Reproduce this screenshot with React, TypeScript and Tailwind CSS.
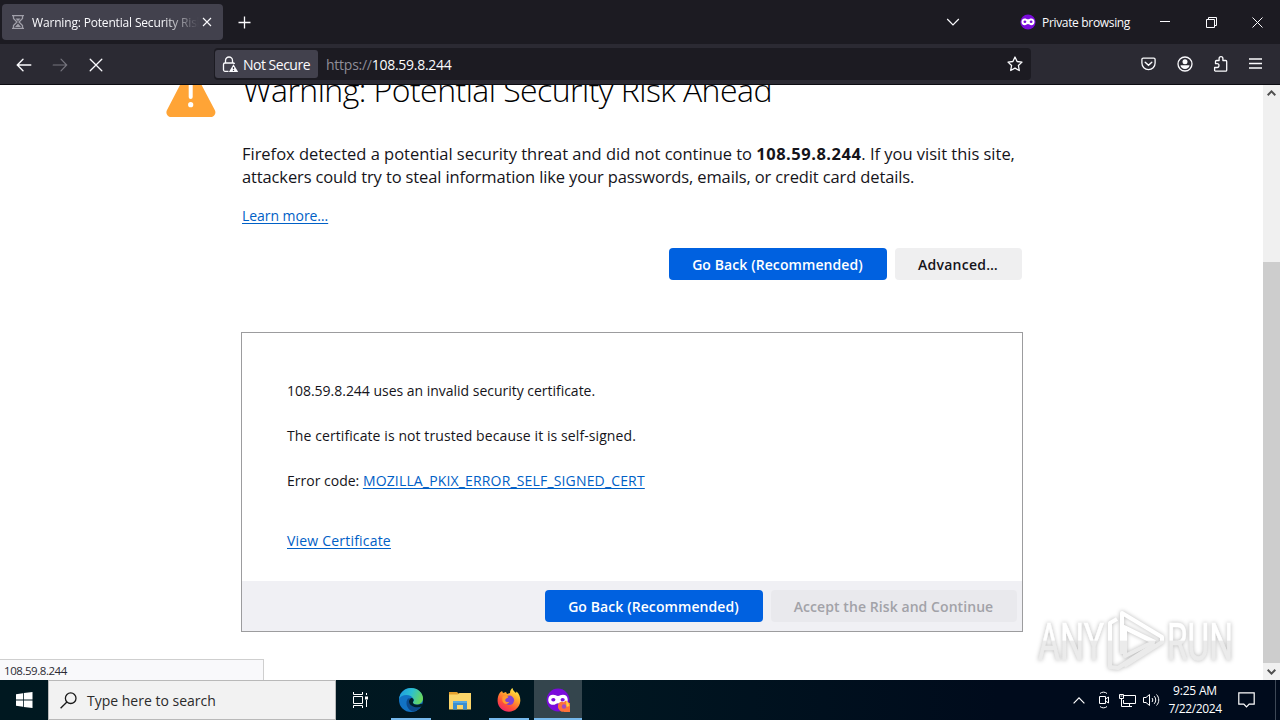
import React from "react";

const buttonBase = "flex h-8 shrink-0 items-center justify-center rounded text-[14px] font-semibold whitespace-nowrap";

function MaskIcon({ className }: { className?: string }) {
  return (
    <svg viewBox="0 0 16 16" className={className}>
      <circle cx="8" cy="8" r="7.6" fill="#7a0bdb" />
      <path
        d="M1.500 7.800c0-2 1.200-3.300 3.200-3.300 1.500 0 2.300.8 3.300.8s1.800-.8 3.300-.8c2 0 3.200 1.300 3.200 3.300s-1.200 3.400-3.200 3.400c-1.500 0-2.300-1.100-3.300-1.100s-1.800 1.100-3.300 1.100c-2 0-3.200-1.400-3.200-3.400z"
        fill="#fff"
      />
      <ellipse cx="4.900" cy="7.800" rx="1.400" ry="1.200" fill="#7a0bdb" />
      <ellipse cx="11.100" cy="7.800" rx="1.400" ry="1.200" fill="#7a0bdb" />
    </svg>
  );
}

function TabStrip() {
  return (
    <div className="flex h-11 shrink-0 items-center bg-[#1c1b22] text-[#fbfbfe]">
      <div className="ml-0.5 flex h-9 w-[221px] items-center rounded bg-[#42414d] pl-[9px]">
        <svg width="14" height="16" viewBox="0 0 14 16" fill="none" stroke="#a09fa9" strokeWidth="1.3">
          <path d="M1 1.700h12M1 14.300h12M2.500 2v2.500L6 8l-3.500 3.500V14M11.500 2v2.500L8 8l3.500 3.500V14" />
          <path d="M4.500 4.500h5L7 7.200zM4 13l3-3.500 3 3.500z" fill="#a09fa9" stroke="none" />
        </svg>
        <span className="ml-[7px] w-[167px] overflow-hidden pt-0.5 text-[12px] tracking-[-0.17px] whitespace-nowrap [mask-image:linear-gradient(to_right,#000_78%,transparent)]">
          Warning: Potential Security Risk Ahead
        </span>
        <svg width="10" height="10" viewBox="0 0 10 10" stroke="currentColor" strokeWidth="1.100" className="ml-[3px]">
          <path d="M1 1l8 8M9 1L1 9" />
        </svg>
      </div>
      <svg width="13" height="13" viewBox="0 0 13 13" stroke="currentColor" strokeWidth="1.300" className="ml-[15px]">
        <path d="M6.500.5v12M.5 6.500h12" />
      </svg>
      <svg width="14" height="8" viewBox="0 0 14 8" fill="none" stroke="currentColor" strokeWidth="1.200" className="ml-auto">
        <path d="M1.200 1L7 6.800 12.800 1" />
      </svg>
      <MaskIcon className="ml-[60px] size-4" />
      <span className="ml-[6px] w-[88px] pt-0.5 text-[12px] tracking-[-0.33px] whitespace-nowrap">Private browsing</span>
      <svg width="10" height="10" viewBox="0 0 10 10" stroke="currentColor" className="ml-[30px]">
        <path d="M0 4.500h10" />
      </svg>
      <svg width="11" height="11" viewBox="0 0 11 11" fill="none" stroke="currentColor" className="ml-[36px]">
        <path d="M.5 2.500h8v8h-8zM2.500 2.500v-2h8v8h-2" />
      </svg>
      <svg width="11" height="11" viewBox="0 0 11 11" stroke="currentColor" className="mr-[17px] ml-[35px]">
        <path d="M.5.5l10 10M10.500.5l-10 10" />
      </svg>
    </div>
  );
}

function Toolbar() {
  return (
    <div className="flex h-[41px] shrink-0 items-center border-b border-[#0c0c12] bg-[#2b2a33] text-[#fbfbfe]">
      <svg width="16" height="14" viewBox="0 0 16 14" fill="none" stroke="currentColor" strokeWidth="1.400" strokeLinecap="round" className="mt-px ml-4">
        <path d="M14.800 7H1.500M7 1.200L1.300 7 7 12.800" />
      </svg>
      <svg width="16" height="14" viewBox="0 0 16 14" fill="none" stroke="#76757e" strokeWidth="1.200" strokeLinecap="round" className="mt-px ml-5">
        <path d="M1.200 7h13.300M9 1.200L14.700 7 9 12.800" />
      </svg>
      <svg width="14" height="14" viewBox="0 0 14 14" stroke="currentColor" strokeWidth="1.300" strokeLinecap="round" className="mt-px ml-[21px]">
        <path d="M1.200 1.200l11.600 11.600M12.800 1.200L1.200 12.800" />
      </svg>
      <div className="ml-[111px] flex h-8 w-[817px] items-center rounded bg-[#1c1b22] pl-px text-[14px]">
        <div className="flex h-7 w-[103px] items-center rounded-[3px] bg-[#42414d] pl-[7px]">
          <svg width="17" height="17" viewBox="0 0 17 17" fill="none" stroke="currentColor" strokeWidth="1.300">
            <path d="M3.500 7V4.500a3.500 3.500 0 017 0V7" />
            <path d="M6.500 15.300H3a1.500 1.500 0 01-1.500-1.500V8.500A1.500 1.500 0 013 7h8a1.500 1.500 0 011.500 1" />
            <path d="M11.500 8.200L16.200 16H6.900z" fill="currentColor" stroke="none" />
            <path d="M11.500 11v2.200M11.500 14v1" stroke="#42414d" strokeWidth="1.200" />
          </svg>
          <span className="ml-[4px] pt-px tracking-[-0.5px] whitespace-nowrap">Not Secure</span>
        </div>
        <span className="ml-2 pt-px tracking-[-0.25px] text-[#8f8e98]">https://</span>
        <span className="pt-px tracking-[-0.28px]">108.59.8.244</span>
        <svg width="16" height="16" viewBox="0 0 16 16" fill="none" stroke="currentColor" strokeWidth="1.300" strokeLinejoin="round" className="mr-2 ml-auto">
          <path d="M8 1l2.100 4.500 4.900.6-3.600 3.400.9 5L8 12.100 3.700 14.500l.9-5L1 6.100l4.900-.6z" />
        </svg>
      </div>
      <svg width="15" height="14" viewBox="0 0 15 14" fill="none" stroke="currentColor" strokeWidth="1.300" className="mr-[21px] ml-auto">
        <path d="M2.200 1.200h10.600a1.300 1.300 0 011.300 1.300V6a6.600 6.600 0 01-13.200 0V2.500a1.300 1.300 0 011.300-1.300z" />
        <path d="M4.200 5.200l3.300 3.100 3.300-3.100" strokeLinecap="round" strokeWidth="1.400" />
      </svg>
      <svg width="16" height="16" viewBox="0 0 16 16" fill="none" stroke="currentColor" strokeWidth="1.300" className="mr-[20px]">
        <circle cx="8" cy="8" r="7" />
        <circle cx="8" cy="5.700" r="2.500" fill="currentColor" stroke="none" />
        <path d="M3.500 9.300h9c0 2-2 3.700-4.500 3.700s-4.500-1.700-4.500-3.700z" fill="currentColor" stroke="none" />
      </svg>
      <svg width="16" height="16" viewBox="0 0 16 16" fill="none" stroke="currentColor" strokeWidth="1.300" strokeLinejoin="round" className="mr-[20px]">
        <path d="M2.500 15.200h10.200a1 1 0 001-1V5.500a1 1 0 00-1-1H9.900V2.600a1.900 1.900 0 00-3.800 0v1.900H3.500a1 1 0 00-1 1v2.200h1.600a1.900 1.900 0 010 3.800H1.600v2.700a1 1 0 001 1z" />
      </svg>
      <svg width="13" height="11" viewBox="0 0 13 11" stroke="currentColor" strokeWidth="1.300" className="mr-[18px] -mt-px">
        <path d="M0 1h13M0 5.500h13M0 10h13" />
      </svg>
    </div>
  );
}

function ErrorPage() {
  return (
    <div className="min-w-0 flex-1 overflow-hidden text-[#15141a]">
      <div className="flex pl-[166px]">
        <svg width="50" height="48" viewBox="0 0 50 48" className="-mt-4 shrink-0">
          <path d="M20.500 3.500a4.800 4.800 0 018.500 0l19.900 37.700a4.700 4.700 0 01-4.200 6.800H5.100a4.700 4.700 0 01-4.200-6.800z" fill="#ffa436" />
          <path d="M24.700 10v18" stroke="#fff" strokeWidth="4" strokeLinecap="round" />
          <circle cx="24.700" cy="35.700" r="2.600" fill="#fff" />
        </svg>
        <div className="ml-[26px] w-[782px]">
          <h1 className="-mt-4 h-[42px] pl-px text-[32px] leading-[42px] font-light tracking-[-0.55px] whitespace-nowrap text-black">
            Warning: Potential Security Risk Ahead
          </h1>
          <p className="mt-[31px] text-[16.5px] leading-[23px] tracking-[-0.02px] whitespace-nowrap">
            Firefox detected a potential security threat and did not continue to{" "}
            <b className="tracking-[0.5px]">108.59.8.244</b>
            <span>. If you visit this site,</span>
            <br />
            <span className="tracking-[-0.13px]">
              attackers could try to steal information like your passwords, emails, or credit card details.
            </span>
          </p>
          <a className="mt-[18px] block h-5 text-[14px] leading-5 tracking-[-0.05px] text-[#0060c6] underline underline-offset-2">Learn more…</a>
          <div className="mt-[22px] flex justify-end gap-2 pr-0.5">
            <button className={buttonBase + " w-[218px] bg-[#0061e0] pr-px tracking-[0.09px] text-white"}>Go Back (Recommended)</button>
            <button className={buttonBase + " w-[127px] bg-[#efeff0] pr-px tracking-[0.25px]"}>Advanced…</button>
          </div>
        </div>
      </div>

      <div className="mt-[52px] ml-[241px] h-[300px] w-[782px] border border-[#9c9c9e] text-[14px]">
        <div className="h-[248px] pt-[48px] pl-[45px] leading-5">
          <p className="tracking-[-0.02px]">108.59.8.244 uses an invalid security certificate.</p>
          <p className="mt-[25px] tracking-[0.09px]">The certificate is not trusted because it is self-signed.</p>
          <p className="mt-[25px]">
            Error code: <a className="tracking-[0.16px] text-[#0060c6] underline underline-offset-2">MOZILLA_PKIX_ERROR_SELF_SIGNED_CERT</a>
          </p>
          <a className="mt-[40px] block tracking-[0.2px] text-[#0060c6] underline underline-offset-2">View Certificate</a>
        </div>
        <div className="flex h-[50px] items-center justify-end gap-2 bg-[#f0f0f4] pr-[5px]">
          <button className={buttonBase + " w-[218px] bg-[#0061e0] pr-px tracking-[0.09px] text-white"}>Go Back (Recommended)</button>
          <button className={buttonBase + " w-[246px] bg-[#e9e9ed] pr-px tracking-[0.07px] text-[#a2a2a8]"}>Accept the Risk and Continue</button>
        </div>
      </div>
    </div>
  );
}

function Scrollbar() {
  return (
    <div className="flex w-[17px] shrink-0 flex-col items-center bg-[#f0f0f0]">
      <svg width="9" height="6" viewBox="0 0 9 6" fill="none" stroke="#505050" strokeWidth="2" className="mt-[5px]">
        <path d="M.7 5.200l3.800-3.800 3.800 3.800" />
      </svg>
      <div className="mt-[166px] h-[401px] w-full bg-[#cdcdcd]" />
      <svg width="9" height="6" viewBox="0 0 9 6" fill="none" stroke="#505050" strokeWidth="2" className="mt-[6px]">
        <path d="M.7.8l3.800 3.800L8.300.8" />
      </svg>
    </div>
  );
}

function Watermark() {
  return (
    <svg width="204" height="72" viewBox="0 0 204 72" className="absolute top-[604px] left-[1034px] drop-shadow-[0_0_2px_rgba(0,0,0,0.28)]">
      <defs>
        <linearGradient id="wm" x1="0" y1="0" x2="0" y2="72" gradientUnits="userSpaceOnUse">
          <stop offset="0.500" stopColor="#ffffff" />
          <stop offset="0.520" stopColor="#ebebeb" />
        </linearGradient>
      </defs>
      <g fill="url(#wm)" stroke="url(#wm)" strokeWidth="0.600" fontFamily="Roboto, sans-serif" fontSize="51">
        <text x="4" y="56" textLength="66" lengthAdjust="spacingAndGlyphs">ANY</text>
        <text x="133" y="56" textLength="66" lengthAdjust="spacingAndGlyphs">RUN</text>
      </g>
      <g fill="none" stroke="url(#wm)" strokeWidth="4" strokeLinejoin="round">
        <path d="M88 18V9l40 24v5L90 62" />
        <path d="M88 9v41M88 22l33 16" />
        <path d="M83 15l-7 4v44l8 1 37-24" />
        <path d="M91 24v28l28-14z" />
      </g>
    </svg>
  );
}

function Taskbar() {
  return (
    <div className="flex h-10 shrink-0 items-center bg-[linear-gradient(to_right,#001820_0%,#001721_45%,#000b1c_78%,#000b1c_100%)] text-white">
      <div className="flex w-12 justify-center">
        <svg width="17" height="16" viewBox="0 0 17 16" fill="#fff">
          <path d="M0 2.200L7 1.200v6.400H0zM7.800 1.100L16.500 0v7.600H7.800zM0 8.400h7v6.400l-7-1zM7.800 8.400h8.700V16l-8.700-1.100z" />
        </svg>
      </div>
      <div className="flex h-10 w-72 items-center border border-[#b9b9b9] bg-[#f2f2f2] pl-[11px] text-[#2b2b2b]">
        <svg width="17" height="17" viewBox="0 0 17 17" fill="none" stroke="#1a1a1a" strokeWidth="1.300">
          <circle cx="10.700" cy="6.200" r="5.300" />
          <path d="M6.900 10L.6 16.300" />
        </svg>
        <span className="ml-[10px] text-[14px]">Type here to search</span>
      </div>
      <div className="flex w-12 justify-center">
        <svg width="17" height="16" viewBox="0 0 17 16" fill="none" stroke="#fff">
          <path d="M1.500 0v2.500h9V0M1.500 16v-2.500h9V16M1.500 4.500h9v7h-9zM14.500 1v2M14.500 8v7" />
          <path d="M13 4.500h3v3h-3z" fill="#fff" stroke="none" />
        </svg>
      </div>
      <div className="ml-[7px] flex h-10 w-10 flex-col items-center border-b-2 border-[#76b9ed] pt-2">
        <svg width="24" height="24" viewBox="0 0 24 24">
          <defs>
            <linearGradient id="edgeTop" x1="0" x2="1" y1="0.200" y2="0.500">
              <stop offset="0" stopColor="#1e9be0" />
              <stop offset="0.500" stopColor="#2cc0d0" />
              <stop offset="1" stopColor="#6ad85a" />
            </linearGradient>
          </defs>
          <circle cx="12" cy="12" r="12" fill="#1273c4" />
          <path d="M.1 11C.8 4.700 5.700 0 12 0c7 0 12 5 12 10.200 0 4-3 6.300-6.500 6.300-2.500 0-4-1-3.500-2.300 1-1 1-2 .6-3C13.500 8.500 10.500 7 7.500 7 4 7 1.200 8.500.1 11z" fill="url(#edgeTop)" />
          <path d="M9 10.500c-3 3.500-1.500 10 3.500 12.500 4 1 8-1.500 10-5.500-5 2.500-11.500 1-12.500-4 0-1.500.5-2.500 1.500-3.200z" fill="#0c4a8c" />
          <path d="M11.800 10.200c1.800-.5 3.200.8 2.800 2.600-.8 1.200-1 1.800-.2 2.800 1.800 1.600 5 1.500 7.600.2l2 .2-.8 2.300c-5.200 2.200-12.500.4-13.200-4.300-.1-1.700.5-3.100 1.800-3.800z" fill="#00202b" />
        </svg>
      </div>
      <div className="ml-[9px] flex w-10 justify-center">
        <svg width="22" height="19" viewBox="0 0 22 19">
          <path d="M0 1h8l2 2h12v4H0z" fill="#e5a02c" />
          <path d="M0 3.500h8.500l2-1.500H22v16.500H0z" fill="#fbd569" />
          <path d="M4 18.500V10h14v8.500h-4V14H8v4.500z" fill="#3b8fd0" />
          <path d="M4 10h14v2H4z" fill="#57a9e2" />
        </svg>
      </div>
      <div className="ml-[9px] flex h-10 w-10 flex-col items-center border-b-2 border-[#76b9ed] pt-2">
        <svg width="24" height="24" viewBox="0 0 24 24">
          <defs>
            <linearGradient id="fox" x1="0.800" y1="0" x2="0.200" y2="1">
              <stop offset="0" stopColor="#fff14a" />
              <stop offset="0.350" stopColor="#ffa92c" />
              <stop offset="0.700" stopColor="#ff5038" />
              <stop offset="1" stopColor="#ec1f72" />
            </linearGradient>
          </defs>
          <path d="M3 4.500L5 3l1 2 3-1 1 2 3-1c0-2.500 1.200-4 2.500-5 .5 2.500 2 3.500 3.500 5l.5-1.500C22.500 6 23.500 9.500 23.300 13c-.4 6-5.300 10.700-11.300 10.700S.9 19.300.6 13.200C.5 9.800 1.200 7 3 4.500z" fill="url(#fox)" />
          <circle cx="12.300" cy="12.300" r="4.800" fill="#8142d3" />
          <path d="M5.500 8.500c2-1.200 4.500-.9 6 .3-.7 1.700-3 1.500-3.300 3.200 0 1.800 2 2.500 4 1.800-1.500 3.700-6.700 2.200-6.900-1.800z" fill="#ff9a2e" />
        </svg>
      </div>
      <div className="ml-[5px] flex h-10 w-12 flex-col items-center border-b-2 border-[#76b9ed] bg-[#34454d] pt-2">
        <div className="relative">
          <MaskIcon className="size-6" />
          <svg width="12" height="12" viewBox="0 0 12 12" className="absolute right-0 bottom-0">
            <path d="M1.500 2.500l2-1 2 .8L8 .5l2.500 2.300A5.600 5.600 0 116 11.800 5.500 5.500 0 011.500 2.500z" fill="#ff7139" />
            <path d="M8 .5l2.500 2.300 1 3.200-3 1z" fill="#ffcb3d" />
            <circle cx="6" cy="6.500" r="2.200" fill="#a24bc4" />
          </svg>
        </div>
      </div>

      <svg width="12" height="7" viewBox="0 0 12 7" fill="none" stroke="currentColor" strokeWidth="1.200" className="ml-auto">
        <path d="M.6 6.300L6 .9l5.400 5.400" />
      </svg>
      <svg width="12" height="18" viewBox="0 0 12 18" fill="none" stroke="currentColor" className="ml-[13px]">
        <path d="M1.500 5.500h6v7h-6zM7.500 8l3-2v6l-3-2M2 2.500c2-1.800 5-1.800 7 0M2 15.500c2 1.800 5 1.800 7 0" />
      </svg>
      <svg width="17" height="15" viewBox="0 0 17 15" fill="none" stroke="currentColor" className="ml-[9px]">
        <path d="M5 2.500h11.500v8H4.500V7M10.500 10.500v3M5 13.500h8M.5 1.500h4v4h-4zM2.500 5.500v8h3M1.500 3h2" />
      </svg>
      <svg width="17" height="14" viewBox="0 0 17 14" fill="none" stroke="currentColor" className="ml-[7px]">
        <path d="M.5 4.500h2.500l3.500-3v11L3 9.500H.5zM9 5c1 1.200 1 2.800 0 4M11.200 3.200c2 2.200 2 5.400 0 7.600M13.500 1.500c3 3.200 3 7.800 0 11" />
      </svg>
      <div className="ml-[8px] flex w-[54px] flex-col items-center text-[12px] leading-[18px] whitespace-nowrap">
        <span className="tracking-[-0.2px]">9:25 AM</span>
        <span className="tracking-[-0.4px]">7/22/2024</span>
      </div>
      <svg width="17" height="16" viewBox="0 0 17 16" fill="none" stroke="currentColor" strokeWidth="1.200" className="ml-[16px]">
        <path d="M.8.8h15.400v11.400h-5L8.500 15l-2.700-2.800h-5z" />
      </svg>
      <div className="mr-1 ml-5 h-10 w-px bg-[#3d4856]" />
    </div>
  );
}

export default function App() {
  return (
    <div className="relative flex h-[720px] w-[1280px] flex-col overflow-hidden bg-white font-['Open_Sans','Noto_Sans',sans-serif]">
      <TabStrip />
      <Toolbar />
      <div className="relative flex h-[595px] shrink-0">
        <ErrorPage />
        <Scrollbar />
        <div className="absolute bottom-0 left-0 h-[21px] w-[264px] border-t border-r border-[#cfcfcf] bg-[#f9f9fb] pl-1 text-[11.5px] leading-[21px] tracking-[-0.45px] text-[#2b2a33]">
          108.59.8.244
        </div>
      </div>
      <Taskbar />
      <Watermark />
    </div>
  );
}
